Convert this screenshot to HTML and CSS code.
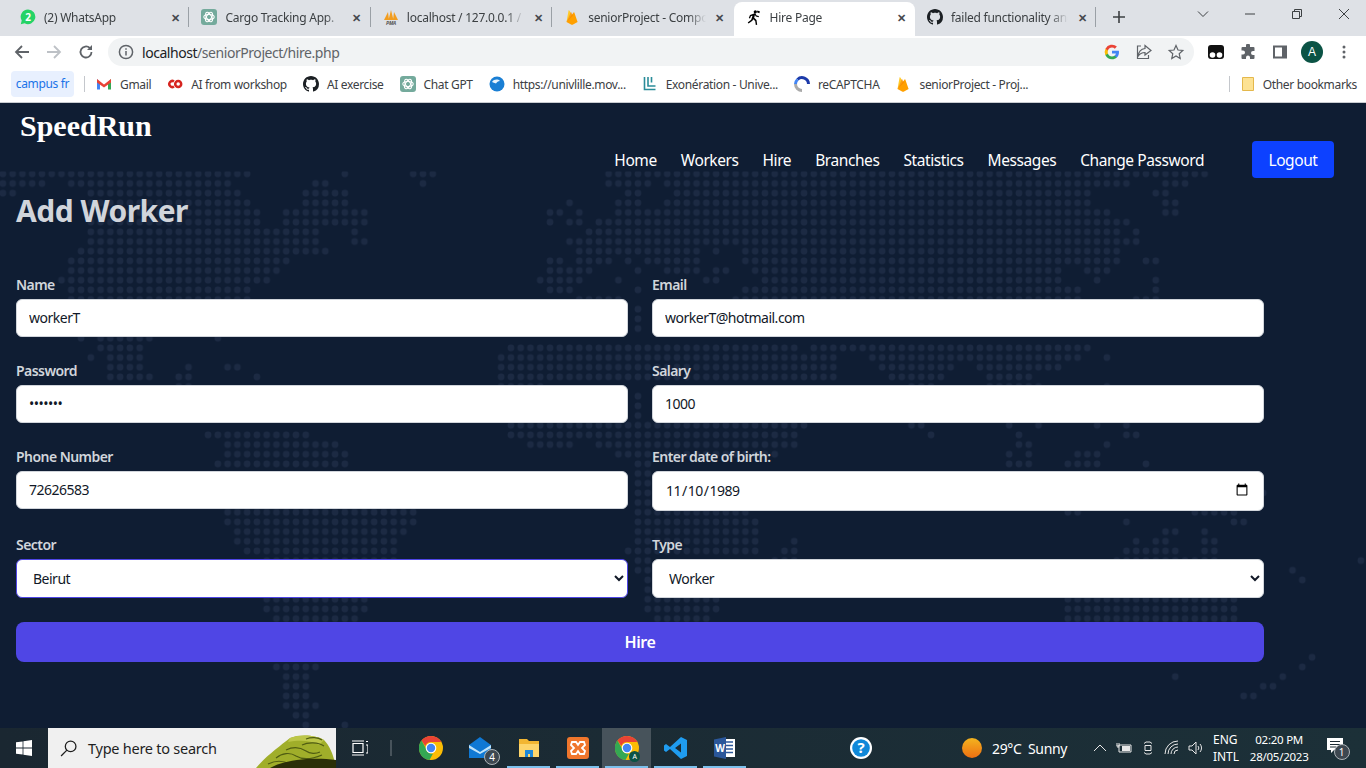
FILE: index.html
```html
<!DOCTYPE html>
<html lang="en">
<head>
    <meta charset="UTF-8">
    <meta name="viewport" content="width=device-width, initial-scale=1.0">
    <title>Hire Page</title>
    <link rel="stylesheet" href="styles.css">
</head>
<body>
    <svg class="defs" width="0" height="0">
        <symbol id="gpt" viewBox="0 0 16 16">
            <rect width="16" height="16" rx="3" fill="#74aa9c"/>
            <g fill="none" stroke="#fff" stroke-width="1.1">
                <ellipse cx="8" cy="8" rx="5.2" ry="2.5"/>
                <ellipse cx="8" cy="8" rx="5.2" ry="2.5" transform="rotate(60 8 8)"/>
                <ellipse cx="8" cy="8" rx="5.2" ry="2.5" transform="rotate(120 8 8)"/>
            </g>
        </symbol>
        <symbol id="fire" viewBox="0 0 16 16">
            <path d="M2.500 13 4.600 1.500c.1-.4.5-.4.7-.1L8.900 7z" fill="#ffca28"/>
            <path d="M10.300 3.600c-.1-.3-.5-.4-.7-.1L2.500 13l5 2.700c.4.200.8.200 1.100 0l5-2.700z" fill="#ffa000"/>
            <path d="M2.500 13 9 6.500 7 2.800z" fill="#f57c00" opacity=".55"/>
        </symbol>
        <symbol id="octo" viewBox="0 0 16 16">
            <path d="M8 0C3.580 0 0 3.580 0 8c0 3.540 2.290 6.530 5.470 7.590.4.070.55-.17.55-.38 0-.19-.01-.82-.01-1.490-2.010.37-2.530-.49-2.690-.94-.09-.23-.48-.94-.82-1.130-.28-.15-.68-.52-.01-.53.63-.01 1.080.58 1.230.82.72 1.210 1.870.87 2.330.66.07-.52.28-.87.51-1.070-1.780-.2-3.640-.89-3.640-3.950 0-.87.31-1.590.82-2.150-.08-.2-.36-1.020.08-2.120 0 0 .67-.21 2.200.82.64-.18 1.320-.27 2-.27.68 0 1.360.09 2 .27 1.530-1.040 2.200-.82 2.200-.82.44 1.100.16 1.920.08 2.120.51.56.82 1.270.82 2.150 0 3.070-1.870 3.750-3.650 3.950.29.25.54.73.54 1.480 0 1.070-.01 1.930-.01 2.200 0 .21.15.46.55.38A8.013 8.013 0 0016 8c0-4.420-3.580-8-8-8z" fill="#1b1f23"/>
        </symbol>
        <symbol id="chromelogo" viewBox="0 0 24 24">
            <circle cx="12" cy="12" r="12" fill="#fbbc05"/>
            <path d="M12 0a12 12 0 0 1 10.400 6H12a6 6 0 0 0-5.700 4.100L2.500 4.600A12 12 0 0 1 12 0z" fill="#ea4335"/>
            <path d="M2.500 4.600 7 12.500a6 6 0 0 0 6.900 5.200L10.500 24A12 12 0 0 1 2.500 4.600z" fill="#34a853"/>
            <circle cx="12" cy="12" r="5.300" fill="#fff"/>
            <circle cx="12" cy="12" r="4.200" fill="#4285f4"/>
        </symbol>
    </svg>

    <div class="browser">
        <div class="tabstrip">
            <div class="tab">
                <svg class="favicon" viewBox="0 0 16 16"><path d="M8 .5a7.300 7.300 0 0 0-6.300 11L.8 15.300l3.900-1A7.300 7.300 0 1 0 8 .5z" fill="#25d366"/><text x="8" y="11.700" class="fav-num">2</text></svg>
                <span class="tab-title">(2) WhatsApp</span><span class="tab-x">✕</span>
            </div>
            <i class="tab-sep"></i>
            <div class="tab">
                <svg class="favicon"><use href="#gpt"/></svg>
                <span class="tab-title">Cargo Tracking App.</span><span class="tab-x">✕</span>
            </div>
            <i class="tab-sep"></i>
            <div class="tab">
                <svg class="favicon" viewBox="0 0 16 16"><path d="M1 11 5 3l1 8zM5.500 11 8 1l2.500 10zM10 11 11 3l4 8z" fill="#f29d1f"/><text x="8" y="15.500" class="fav-pma">PMA</text></svg>
                <span class="tab-title">localhost / 127.0.0.1 /</span><span class="tab-x">✕</span>
            </div>
            <i class="tab-sep"></i>
            <div class="tab">
                <svg class="favicon"><use href="#fire"/></svg>
                <span class="tab-title">seniorProject - Compo</span><span class="tab-x">✕</span>
            </div>
            <div class="tab tab-active">
                <svg class="favicon" viewBox="0 0 16 16"><circle cx="9.300" cy="2.800" r="1.600"/><path d="M7.500 4.700 4 6l-1.200 3 1.200.4 1-2.300 1.500-.4-1.300 4-3.500 2.800.9 1.100 3.800-2.800.8-1.600 2 1.700.6 4 1.400-.2-.7-4.700-2.300-2.300.7-2.600 1 1.500 2.800.6.2-1.200-2.300-.6-1.500-2.500z"/><path d="M11.500 1.500l2.500 1-.7 1.700-2.400-1z"/></svg>
                <span class="tab-title">Hire Page</span><span class="tab-x">✕</span>
            </div>
            <div class="tab">
                <svg class="favicon"><use href="#octo"/></svg>
                <span class="tab-title">failed functionality and</span><span class="tab-x">✕</span>
            </div>
            <i class="tab-sep"></i>
            <svg class="newtab" viewBox="0 0 12 12"><path d="M6 0v12M0 6h12"/></svg>
            <div class="winctl">
                <svg viewBox="0 0 12 12"><path d="M1 3.500 6 8.500l5-5"/></svg>
                <svg viewBox="0 0 12 12"><path d="M1 6h10"/></svg>
                <svg viewBox="0 0 12 12"><path d="M1.500 3.500h7v7h-7zM3.500 3.500v-2h7v7h-2"/></svg>
                <svg viewBox="0 0 12 12"><path d="M1 1l10 10M11 1 1 11"/></svg>
            </div>
        </div>

        <div class="toolbar">
            <button class="tool"><svg viewBox="0 0 16 16"><path d="M15 8H2M8 2 2 8l6 6"/></svg></button>
            <button class="tool tool-off"><svg viewBox="0 0 16 16"><path d="M1 8h13M8 2l6 6-6 6"/></svg></button>
            <button class="tool"><svg viewBox="0 0 16 16"><path d="M13.500 8A5.500 5.500 0 1 1 11.800 4"/><path class="solid" d="M14 1v5H9z"/></svg></button>
            <div class="omnibox">
                <svg class="info" viewBox="0 0 16 16"><circle cx="8" cy="8" r="6.600"/><path d="M8 7v4.500M8 4.200v1.600"/></svg>
                <span class="url"><b>localhost</b>/seniorProject/hire.php</span>
                <span class="omni-icons">
                    <svg viewBox="0 0 48 48"><path fill="#4285f4" d="M45 24.500c0-1.600-.1-3.100-.4-4.500H24v8.500h11.800a10 10 0 0 1-4.400 6.600v5.500h7.100C42.700 36.800 45 31.200 45 24.500z"/><path fill="#34a853" d="M24 46c5.900 0 10.900-2 14.500-5.300l-7.100-5.500c-2 1.300-4.500 2.100-7.400 2.100-5.700 0-10.500-3.800-12.200-9H4.400v5.700A22 22 0 0 0 24 46z"/><path fill="#fbbc05" d="M11.800 28.300a13 13 0 0 1 0-8.600V14H4.400a22 22 0 0 0 0 20z"/><path fill="#ea4335" d="M24 10.700c3.200 0 6.100 1.100 8.400 3.300l6.300-6.300A22 22 0 0 0 4.400 14l7.400 5.700c1.700-5.200 6.500-9 12.200-9z"/></svg>
                    <svg class="line" viewBox="0 0 16 16"><path d="M9 1.500 15 6.500 9 11V8.500C5.500 8.500 3.500 10 2 12.500 2.500 8 5 5 9 4.500zM5 2H1.500v12.500h11V11"/></svg>
                    <svg class="line" viewBox="0 0 16 16"><path d="M8 1.500 10 6l4.800.5-3.600 3.200 1 4.800L8 12l-4.200 2.500 1-4.800L1.200 6.500 6 6z"/></svg>
                </span>
            </div>
            <button class="tool"><svg class="bare" viewBox="0 0 16 16"><rect y="1" width="16" height="14" rx="3" fill="#111"/><circle cx="4.500" cy="11" r="2.800" fill="#fff"/><circle cx="11.500" cy="11" r="2.800" fill="#fff"/></svg></button>
            <button class="tool"><svg class="bare" viewBox="0 0 16 16"><path fill="#5f6368" d="M6 1.500a2 2 0 0 1 4 0V3h3.500a1 1 0 0 1 1 1v3H13a2 2 0 0 0 0 4h1.500v3a1 1 0 0 1-1 1H10v-1.500a2 2 0 0 0-4 0V15H2.500a1 1 0 0 1-1-1v-3.500H3a2 2 0 0 0 0-4H1.500V4a1 1 0 0 1 1-1H6z"/></svg></button>
            <button class="tool"><svg class="bare" viewBox="0 0 16 16"><path fill="#5f6368" d="M1 1.500h14v13H1zm2 2v9h7v-9z"/></svg></button>
            <button class="tool"><span class="avatar">A</span></button>
            <button class="tool"><svg class="bare" viewBox="0 0 16 16"><g fill="#5f6368"><circle cx="8" cy="3" r="1.500"/><circle cx="8" cy="8" r="1.500"/><circle cx="8" cy="13" r="1.500"/></g></svg></button>
        </div>

        <div class="bookmarks">
            <span class="chip">campus fr</span>
            <i class="bm-sep"></i>
            <span class="bm"><svg viewBox="0 0 16 16"><path fill="#4285f4" d="M1 3v10.500h3V6.500z"/><path fill="#34a853" d="M15 3v10.500h-3V6.500z"/><path fill="#ea4335" d="M1 3l7 5.500L15 3v3.500l-7 5-7-5z"/></svg>Gmail</span>
            <span class="bm"><svg viewBox="0 0 16 16"><g fill="none" stroke="#d6241f" stroke-width="2.500"><path d="M7 5.500a3 3 0 1 0 0 5"/><circle cx="11.200" cy="8" r="3"/></g></svg>AI from workshop</span>
            <span class="bm"><svg><use href="#octo"/></svg>AI exercise</span>
            <span class="bm"><svg><use href="#gpt"/></svg>Chat GPT</span>
            <span class="bm"><svg viewBox="0 0 16 16"><circle cx="8" cy="8" r="7.500" fill="#1a7fd4"/><path d="M3 6c2-3 6-3 8-1-2 0-3 1-4 2.500C5.500 7 4 6.500 3 6z" fill="#e8f4fd"/></svg>https://univlille.mov...</span>
            <span class="bm"><svg viewBox="0 0 16 16"><path d="M2.500 1v12.500h11M6 1v9h7.500M9.500 1v5.500" fill="none" stroke="#2a8c99" stroke-width="1.600"/></svg>Exonération - Unive...</span>
            <span class="bm"><svg viewBox="0 0 16 16"><path d="M14.500 8A6.500 6.500 0 0 0 3.500 3.500" fill="none" stroke="#1c3aa9" stroke-width="3"/><path d="M8 14.500A6.500 6.500 0 0 1 1.500 8" fill="none" stroke="#aaa" stroke-width="3"/><path d="M1.500 8a6.500 6.500 0 0 1 2-4.500" fill="none" stroke="#4285f4" stroke-width="3"/></svg>reCAPTCHA</span>
            <span class="bm"><svg><use href="#fire"/></svg>seniorProject - Proj...</span>
            <i class="bm-sep bm-sep-right"></i>
            <span class="bm bm-other"><svg viewBox="0 0 16 16"><path d="M2.500 1.500h11v13h-11z" fill="#fde293" stroke="#e4b84c"/></svg>Other bookmarks</span>
        </div>
    </div>

    <div class="page">
        <svg class="worldmap" viewBox="0 0 140 59" preserveAspectRatio="none">
            <defs>
                <pattern id="dot" width="1" height="1" patternUnits="userSpaceOnUse">
                    <circle cx=".5" cy=".5" r=".34" fill="#1c2a43"/>
                </pattern>
            </defs>
            <path fill="url(#dot)" d="
                M0 0h26v1h-26z M35 0h1v1h-1z M42 0h3v1h-3z M62 0h62v1h-62z
                M0 1h5v1h-5z M7 1h17v1h-17z M32 1h2v1h-2z M43 1h1v1h-1z M62 1h5v1h-5z M68 1h48v1h-48z M119 1h3v1h-3z
                M0 2h2v1h-2z M9 2h16v1h-16z M31 2h5v1h-5z M64 2h2v1h-2z M69 2h43v1h-43z M118 2h2v1h-2z
                M9 3h17v1h-17z M31 3h5v1h-5z M58 3h1v1h-1z M63 3h3v1h-3z M68 3h44v1h-44z M119 3h2v1h-2z
                M9 4h18v1h-18z M29 4h9v1h-9z M56 4h2v1h-2z M59 4h1v1h-1z M63 4h51v1h-51z M119 4h2v1h-2z
                M9 5h18v1h-18z M29 5h9v1h-9z M56 5h1v1h-1z M58 5h2v1h-2z M61 5h55v1h-55z
                M9 6h24v1h-24z M36 6h1v1h-1z M60 6h55v1h-55z M116 6h1v1h-1z
                M9 7h24v1h-24z M36 7h2v1h-2z M58 7h59v1h-59z
                M8 8h26v1h-26z M59 8h13v1h-13z M73 8h1v1h-1z M76 8h39v1h-39z
                M7 9h23v1h-23z M56 9h2v1h-2z M59 9h4v1h-4z M64 9h1v1h-1z M66 9h6v1h-6z M76 9h39v1h-39z M117 9h2v1h-2z
                M7 10h22v1h-22z M56 10h5v1h-5z M65 10h1v1h-1z M68 10h4v1h-4z M73 10h2v1h-2z M77 10h32v1h-32z M111 10h3v1h-3z
                M6 11h22v1h-22z M55 11h5v1h-5z M63 11h1v1h-1z M72 11h2v1h-2z M78 11h31v1h-31z M112 11h1v1h-1z M118 11h1v1h-1z
                M7 12h19v1h-19z M56 12h3v1h-3z M65 12h1v1h-1z M76 12h35v1h-35z M118 12h1v1h-1z
                M7 13h19v1h-19z M59 13h5v1h-5z M75 13h36v1h-36z M116 13h3v1h-3z
                M65 14h1v3h-1z
                M8 17h1v1h-1z M10 17h6v1h-6z M22 17h1v1h-1z
                M10 18h5v1h-5z M52 18h30v1h-30z M83 18h29v1h-29z
                M9 19h1v1h-1z M11 19h4v1h-4z M51 19h35v1h-35z M89 19h22v1h-22z M113 19h1v1h-1z
                M11 20h4v1h-4z M19 20h1v1h-1z M23 20h2v1h-2z M51 20h35v1h-35z M90 20h8v1h-8z M100 20h9v1h-9z
                M11 21h5v1h-5z M18 21h2v1h-2z M26 21h1v1h-1z M51 21h35v1h-35z M91 21h6v1h-6z M101 21h5v1h-5z
                M18 22h2v1h-2z M51 22h5v1h-5z M93 22h3v1h-3z M101 22h6v1h-6z M113 22h1v1h-1z
                M65 23h1v3h-1z
                M52 26h31v1h-31z M93 26h2v1h-2z M103 26h1v1h-1z M106 26h1v1h-1z M112 26h1v1h-1z M115 26h1v1h-1z
                M21 27h11v1h-11z M52 27h30v1h-30z M95 27h1v1h-1z M104 27h1v1h-1z M115 27h2v1h-2z
                M23 28h12v1h-12z M54 28h5v1h-5z M61 28h21v1h-21z M104 28h2v1h-2z M113 28h1v1h-1z
                M23 29h13v1h-13z M63 29h17v1h-17z M103 29h1v1h-1z M105 29h1v1h-1z M110 29h3v1h-3z
                M22 30h14v1h-14z M65 30h2v1h-2z M103 30h3v1h-3z M109 30h4v1h-4z M117 30h1v1h-1z
                M65 31h2v4h-2z M129 33h1v1h-1z
                M23 35h20v1h-20z M65 35h12v1h-12z M109 35h2v1h-2z M122 35h5v1h-5z
                M23 36h20v1h-20z M65 36h13v1h-13z M115 36h1v1h-1z M126 36h2v1h-2z
                M24 37h18v1h-18z M65 37h13v1h-13z M119 37h2v1h-2z M123 37h1v1h-1z
                M24 38h17v1h-17z M65 38h13v1h-13z M81 38h1v1h-1z M116 38h1v1h-1z M118 38h2v1h-2z M123 38h2v1h-2z
                M25 39h16v1h-16z M64 39h14v1h-14z M80 39h2v1h-2z M115 39h6v1h-6z M123 39h2v1h-2z
                M27 40h14v1h-14z M65 40h2v1h-2z M79 40h3v1h-3z M114 40h11v1h-11z M139 40h1v1h-1z
                M65 41h2v1h-2z M132 41h1v1h-1z
                M66 42h1v2h-1z M133 42h1v1h-1z
                M27 44h11v1h-11z M66 44h8v1h-8z M109 44h18v1h-18z
                M27 45h11v1h-11z M66 45h8v1h-8z M109 45h18v1h-18z
                M28 46h9v1h-9z M67 46h6v1h-6z M109 46h18v1h-18z
                M134 50h1v1h-1z
                M28 51h5v1h-5z M133 51h1v1h-1z
                M29 52h3v1h-3z M120 52h1v1h-1z M131 52h1v1h-1z
                M29 53h3v1h-3z M129 53h2v1h-2z
                M29 54h3v1h-3z M127 54h2v1h-2z
                M29 55h4v1h-4z
                M30 56h2v1h-2z
                M31 57h1v1h-1z M35 57h1v1h-1z"/>
        </svg>

        <header class="topbar">
            <div class="logo">SpeedRun</div>
            <nav class="nav">
                <a href="#">Home</a>
                <a href="#">Workers</a>
                <a href="#">Hire</a>
                <a href="#">Branches</a>
                <a href="#">Statistics</a>
                <a href="#">Messages</a>
                <a href="#">Change Password</a>
                <button class="logout">Logout</button>
            </nav>
        </header>

        <main class="content">
            <h1>Add Worker</h1>
            <form class="hire-form">
                <div class="field">
                    <label>Name</label>
                    <input type="text" value="workerT">
                </div>
                <div class="field">
                    <label>Email</label>
                    <input type="email" value="workerT@hotmail.com">
                </div>
                <div class="field">
                    <label>Password</label>
                    <input type="password" value="1234567">
                </div>
                <div class="field">
                    <label>Salary</label>
                    <input type="text" value="1000">
                </div>
                <div class="field">
                    <label>Phone Number</label>
                    <input type="text" value="72626583">
                </div>
                <div class="field">
                    <label>Enter date of birth:</label>
                    <input class="date" type="date" value="1989-11-10">
                </div>
                <div class="field">
                    <label>Sector</label>
                    <select class="focused"><option>Beirut</option></select>
                </div>
                <div class="field">
                    <label>Type</label>
                    <select><option>Worker</option></select>
                </div>
                <button class="hire-btn" type="button">Hire</button>
            </form>
        </main>
    </div>

    <div class="taskbar">
        <svg class="start" viewBox="0 0 16 16"><path fill="#fff" d="M0 2.300 6.600 1.400V7.600H0zM7.400 1.300 16 0v7.600H7.400zM0 8.400h6.600v6.200L0 13.700zM7.400 8.400H16V16l-8.600-1.300z"/></svg>
        <div class="search">
            <svg class="glass" viewBox="0 0 16 16"><circle cx="10" cy="6" r="5"/><path d="M6.500 9.500 1 15"/></svg>
            <span>Type here to search</span>
            <svg class="hill" viewBox="0 0 80 34" preserveAspectRatio="none">
                <path d="M0 34C10 22 24 12 34 4c10-4 26-3 34 2 6 6 10 16 12 28z" fill="#a0ae2a"/>
                <path d="M34 4c10-4 26-3 34 2l-5 5c-8-5-21-5-31-3z" fill="#bcc648"/>
                <g fill="none" stroke="#4f5c12" stroke-width="1.100">
                    <path d="M50 5c5-2 12-2 16 1"/><path d="M46 11c6-3 16-3 22 1"/>
                    <path d="M30 16c8-4 14-3 20 1 4 3 10 3 14 1"/>
                    <path d="M20 24c6-5 14-6 20-2 5 3 14 4 26-1"/><path d="M12 30c8-4 16-3 22 0"/>
                </g>
                <path d="M14 34c16-9 44-11 66-8v8z" fill="#2b2f08"/>
            </svg>
        </div>
        <svg class="taskview" viewBox="0 0 16 16"><path d="M1 3.500h10v9H1zM0 1h12M0 15h12M14 1.500h2M14 5h2v8h-2" fill="none" stroke="#fff" stroke-width="1.200"/></svg>
        <i class="task-sep"></i>
        <div class="tasks">
            <span class="task"><svg><use href="#chromelogo"/></svg></span>
            <span class="task">
                <svg viewBox="0 0 24 24"><path d="M1 9 12 1l11 8v13H1z" fill="#0f78d4"/><path d="M1 9l11 7 11-7v3l-11 6-11-6z" fill="#bfe3fa"/></svg>
                <span class="badge">4</span>
            </span>
            <span class="task task-open"><svg viewBox="0 0 24 24"><path d="M2 3h8l2 2h10v4H2z" fill="#f2b632"/><path d="M2 8h20v13H2z" fill="#fdd56b"/><path d="M8 14h8v7H8z" fill="#1e88d9"/><path d="M11 18h2v3h-2z" fill="#fdd56b"/></svg></span>
            <span class="task task-open"><svg viewBox="0 0 24 24"><rect x="1" y="1" width="22" height="22" rx="3" fill="#f0762c"/><path d="M6 6h4l2 3 2-3h4l1 3-3 3 3 3-1 3h-4l-2-3-2 3H6l-1-3 3-3-3-3z" fill="none" stroke="#fff" stroke-width="1.800"/></svg></span>
            <span class="task task-open task-active">
                <svg><use href="#chromelogo"/></svg>
                <span class="profile">A</span>
            </span>
            <span class="task task-open"><svg viewBox="0 0 24 24"><path d="M17 1 23 4v16l-6 3L6 13l-4 3-2-1.500V9.500L2 8l4 3zM17 7.500 11 12l6 4.500z" fill="#1f9cf0"/></svg></span>
            <span class="task task-open"><svg viewBox="0 0 24 24"><path d="M9 3h13v18H9z" fill="#fff"/><path d="M12 6h8M12 9.500h8M12 13h8M12 16.500h8" stroke="#2b579a" stroke-width="1.500"/><path d="M1 3.500 13 1v22L1 20.500z" fill="#2b579a"/><text x="7" y="15.500" class="word-w">W</text></svg></span>
        </div>
        <svg class="help" viewBox="0 0 24 24"><circle cx="12" cy="12" r="11" fill="#fff"/><circle cx="12" cy="12" r="8.800" fill="#0f88d9"/><text x="12" y="17" class="help-q">?</text></svg>
        <div class="weather"><i class="sun"></i><span>29°C&nbsp; Sunny</span></div>
        <div class="tray">
            <svg viewBox="0 0 16 16"><path d="M2 11l6-6 6 6"/></svg>
            <svg viewBox="0 0 16 16"><path d="M3 5h12v7H3zM1 3v3M3 3v3M.5 6H3.500M2 6v2"/><path class="solid" d="M6 6h8v5H6z"/></svg>
            <svg viewBox="0 0 16 16"><path d="M4 3.500 6 2h4l2 1.500M4 12.500 6 14h4l2-1.500M5 5.500h6v5H5z"/></svg>
            <svg viewBox="0 0 16 16"><path d="M1 14a13 13 0 0 1 13-13M4 14a10 10 0 0 1 10-10M7 14a7 7 0 0 1 7-7M10 14a4 4 0 0 1 4-4"/></svg>
            <svg viewBox="0 0 16 16"><path d="M1 6h3l4-4v12l-4-4H1zM10 6a3 3 0 0 1 0 4M12 4a6 6 0 0 1 0 8"/></svg>
        </div>
        <div class="lang"><span>ENG</span><span>INTL</span></div>
        <div class="clock"><span>02:20 PM</span><span>28/05/2023</span></div>
        <div class="notif">
            <svg viewBox="0 0 16 16"><path fill="#fff" d="M0 0h16v12H7l-3 3v-3H0z"/><path d="M3 3.500h10M3 6.500h10M3 9h6" stroke="#1b2a33"/></svg>
            <span class="notif-num">1</span>
        </div>
    </div>
</body>
</html>
```

FILE: styles.css
```css
* {
    box-sizing: border-box;
}
body {
    margin: 0;
    height: 100vh;
    display: flex;
    flex-direction: column;
    overflow: hidden;
    font-family: "Noto Sans", sans-serif;
    background: #0f1d33;
}
.defs {
    position: absolute;
}

/* browser chrome */
.browser {
    height: 103px;
    flex: none;
    background: white;
    border-bottom: 1px solid #c9ccd1;
    font-size: 12px;
    letter-spacing: -0.25px;
    color: #3c4043;
}
.tabstrip {
    height: 36px;
    background: #dee1e6;
    display: flex;
    align-items: flex-end;
    padding-left: 8px;
}
.tab {
    width: 181.4px;
    flex: none;
    height: 34px;
    padding: 0 8px 4px 12px;
    display: flex;
    align-items: center;
    gap: 8px;
    border-radius: 8px 8px 0 0;
}
.tab-active {
    background: white;
}
.tab-sep {
    width: 1px;
    height: 20px;
    margin: 0 0 9px -1px;
    background: #9aa0a6;
}
.favicon {
    width: 16px;
    height: 16px;
    flex: none;
}
.fav-num {
    font-size: 10px;
    font-weight: 700;
    text-anchor: middle;
    fill: white;
}
.fav-pma {
    font-size: 5px;
    font-weight: 700;
    font-style: italic;
    text-anchor: middle;
    fill: #555;
}
.tab-title {
    flex: 1;
    white-space: nowrap;
    overflow: hidden;
    -webkit-mask-image: linear-gradient(to left, transparent, black 18px);
    mask-image: linear-gradient(to left, transparent, black 18px);
}
.tab-x {
    width: 12px;
    font-size: 11px;
    font-weight: 700;
    text-align: center;
    color: #45494e;
}
.newtab {
    width: 12px;
    height: 12px;
    margin: 0 0 13px 17px;
    stroke: #3c4043;
    stroke-width: 1.6;
}
.winctl {
    margin-left: auto;
    margin-right: 16px;
    margin-bottom: 16px;
    display: flex;
    gap: 35px;
}
.winctl svg {
    width: 12px;
    height: 12px;
    fill: none;
    stroke: #3c4043;
}
.toolbar {
    height: 32px;
    display: flex;
    align-items: center;
    padding: 0 6px;
}
.tool {
    width: 32px;
    height: 32px;
    padding: 0;
    border: none;
    background: none;
    display: flex;
    align-items: center;
    justify-content: center;
}
.tool svg {
    width: 16px;
    height: 16px;
    fill: none;
    stroke: #5f6368;
    stroke-width: 1.8;
}
.tool svg.bare {
    stroke: none;
}
.tool .solid {
    fill: #5f6368;
    stroke: none;
}
.tool-off svg {
    stroke: #bdc1c6;
}
.omnibox {
    flex: 1;
    height: 28px;
    margin: 0 6px;
    padding: 0 2px 0 10px;
    background: #f1f3f4;
    border-radius: 14px;
    display: flex;
    align-items: center;
    gap: 8px;
    font-size: 14px;
    letter-spacing: -0.45px;
    color: #5f6368;
}
.info {
    width: 16px;
    height: 16px;
    fill: none;
    stroke: #5f6368;
    stroke-width: 1.5;
}
.url b {
    font-weight: 400;
    color: #202124;
}
.omni-icons {
    margin-left: auto;
    display: flex;
}
.omni-icons svg {
    width: 32px;
    height: 16px;
}
.omni-icons .line {
    fill: none;
    stroke: #5f6368;
    stroke-width: 1.2;
}
.avatar {
    width: 22px;
    height: 22px;
    border-radius: 50%;
    background: #0b5345;
    color: white;
    font-size: 12px;
    line-height: 22px;
    text-align: center;
}
.bookmarks {
    height: 34px;
    padding: 0 9px 2px 11px;
    display: flex;
    align-items: center;
    letter-spacing: -0.34px;
}
.chip {
    width: 63px;
    height: 26px;
    line-height: 26px;
    text-align: center;
    background: #e8f0fe;
    border-radius: 4px;
    color: #1a73e8;
}
.bm-sep {
    width: 1px;
    height: 16px;
    margin: 0 11px 0 10px;
    background: #c4c7cc;
}
.bm {
    margin-right: 16px;
    display: flex;
    align-items: center;
    gap: 8px;
    white-space: nowrap;
}
.bm svg {
    width: 16px;
    height: 16px;
}
.bm-sep-right {
    margin-left: auto;
    margin-right: 10px;
}
.bm-other {
    margin-right: 0;
    gap: 7px;
}

/* page */
.page {
    flex: 1;
    position: relative;
    overflow: hidden;
    background: #0f1d33;
}
.worldmap {
    position: absolute;
    left: -1.6px;
    top: 65.5px;
    width: 1367.8px;
    height: 570.5px;
    clip-path: inset(3px 0 0 0);
}
.topbar {
    position: relative;
    padding-top: 8px;
}
.logo {
    padding-left: 20px;
    font-family: "Liberation Serif", serif;
    font-size: 30px;
    font-weight: 700;
    line-height: 30px;
    color: white;
}
.nav {
    display: flex;
    justify-content: flex-end;
    align-items: center;
    gap: 24px;
    padding-right: 32px;
    font-size: 15.5px;
    letter-spacing: -0.42px;
}
.nav a {
    color: white;
    text-decoration: none;
}
.logout {
    margin-left: 24px;
    width: 82px;
    height: 37px;
    border: none;
    border-radius: 4px;
    background: #0d41ff;
    color: white;
    font: inherit;
    letter-spacing: inherit;
}
.content {
    position: relative;
    padding: 0 16px;
}
h1 {
    margin: 15px 0 46px;
    font-size: 30px;
    line-height: 36px;
    font-weight: 700;
    letter-spacing: -0.5px;
    color: #d1d5db;
}
.hire-form {
    width: 1248px;
    display: grid;
    grid-template-columns: 1fr 1fr;
    gap: 24px;
}
.field {
    display: flex;
    flex-direction: column;
}
.field label {
    margin-bottom: 4px;
    font-size: 14px;
    line-height: 20px;
    font-weight: 600;
    letter-spacing: -0.55px;
    color: #d1d5db;
}
.field input,
.field select {
    height: 38px;
    padding: 0 12px 2px;
    border: 1px solid #d1d5db;
    border-radius: 6px;
    background: white;
    font-family: inherit;
    font-size: 14px;
    letter-spacing: -0.5px;
    color: #111827;
}
.field input.date {
    height: 40px;
}
.field select {
    height: 39px;
    padding-bottom: 0;
}
.field select.focused {
    border-color: #4f46e5;
}
.hire-btn {
    grid-column: span 2;
    height: 40px;
    border: none;
    border-radius: 8px;
    background: #4f46e5;
    color: white;
    font-family: inherit;
    font-size: 16px;
    font-weight: 600;
    letter-spacing: -0.35px;
}

/* taskbar */
.taskbar {
    height: 40px;
    flex: none;
    display: flex;
    align-items: center;
    background: linear-gradient(to right, #1a2731, #1c3038);
    color: white;
    font-size: 14px;
    letter-spacing: -0.35px;
}
.start {
    width: 16px;
    height: 16px;
    margin: 0 16px;
}
.search {
    width: 288px;
    height: 40px;
    padding-left: 12px;
    display: flex;
    align-items: center;
    gap: 11px;
    position: relative;
    overflow: hidden;
    background: #f0f0f0;
    color: #1f1f1f;
    font-size: 14.5px;
    letter-spacing: -0.25px;
}
.glass {
    width: 17px;
    height: 17px;
    fill: none;
    stroke: #1f1f1f;
    stroke-width: 1.2;
}
.hill {
    position: absolute;
    right: 0;
    bottom: 0;
    width: 80px;
    height: 34px;
}
.taskview {
    width: 16px;
    height: 16px;
    margin-left: 16px;
}
.task-sep {
    width: 2px;
    height: 16px;
    margin-left: 22px;
    background: #47535b;
}
.tasks {
    margin-left: 14px;
    display: flex;
}
.task {
    width: 49px;
    height: 40px;
    position: relative;
    display: flex;
    align-items: center;
    justify-content: center;
}
.task svg {
    width: 24px;
    height: 24px;
}
.task-open::after {
    content: "";
    position: absolute;
    left: 3px;
    right: 3px;
    bottom: 0;
    height: 2px;
    background: #7cc0ec;
}
.task-active {
    background: #47535b;
}
.badge,
.notif-num {
    position: absolute;
    width: 16px;
    height: 16px;
    border-radius: 50%;
    background: #3d4750;
    border: 1px solid #aeb4b8;
    font-size: 10px;
    line-height: 14px;
    letter-spacing: 0;
    text-align: center;
    color: white;
}
.badge {
    right: 4px;
    bottom: 3px;
}
.profile {
    position: absolute;
    right: 11px;
    bottom: 6px;
    width: 11px;
    height: 11px;
    border-radius: 50%;
    background: #0b5345;
    font-size: 7px;
    line-height: 11px;
    text-align: center;
}
.word-w {
    font-size: 10px;
    font-weight: 700;
    text-anchor: middle;
    fill: white;
}
.help {
    width: 24px;
    height: 24px;
    margin-left: 100px;
}
.help-q {
    font-size: 15px;
    font-weight: 700;
    text-anchor: middle;
    fill: white;
}
.weather {
    margin-left: 89px;
    display: flex;
    align-items: center;
    gap: 10px;
}
.sun {
    width: 20px;
    height: 20px;
    border-radius: 50%;
    background: linear-gradient(#f3b41f, #ee6f12);
}
.tray {
    margin-left: 25px;
    display: flex;
    align-items: center;
    gap: 8px;
}
.tray svg {
    width: 16px;
    height: 16px;
    fill: none;
    stroke: #e8e8e8;
}
.tray .solid {
    fill: #e8e8e8;
    stroke: none;
}
.lang,
.clock {
    display: flex;
    flex-direction: column;
    line-height: 17px;
    font-size: 12px;
    letter-spacing: -0.1px;
}
.lang {
    margin-left: 9px;
}
.clock {
    margin-left: 11px;
    align-items: center;
    font-size: 11.5px;
    letter-spacing: -0.25px;
}
.notif {
    margin-left: 18px;
    position: relative;
    width: 18px;
    height: 20px;
}
.notif svg {
    width: 16px;
    height: 16px;
}
.notif-num {
    right: -5px;
    bottom: -2px;
}
```
